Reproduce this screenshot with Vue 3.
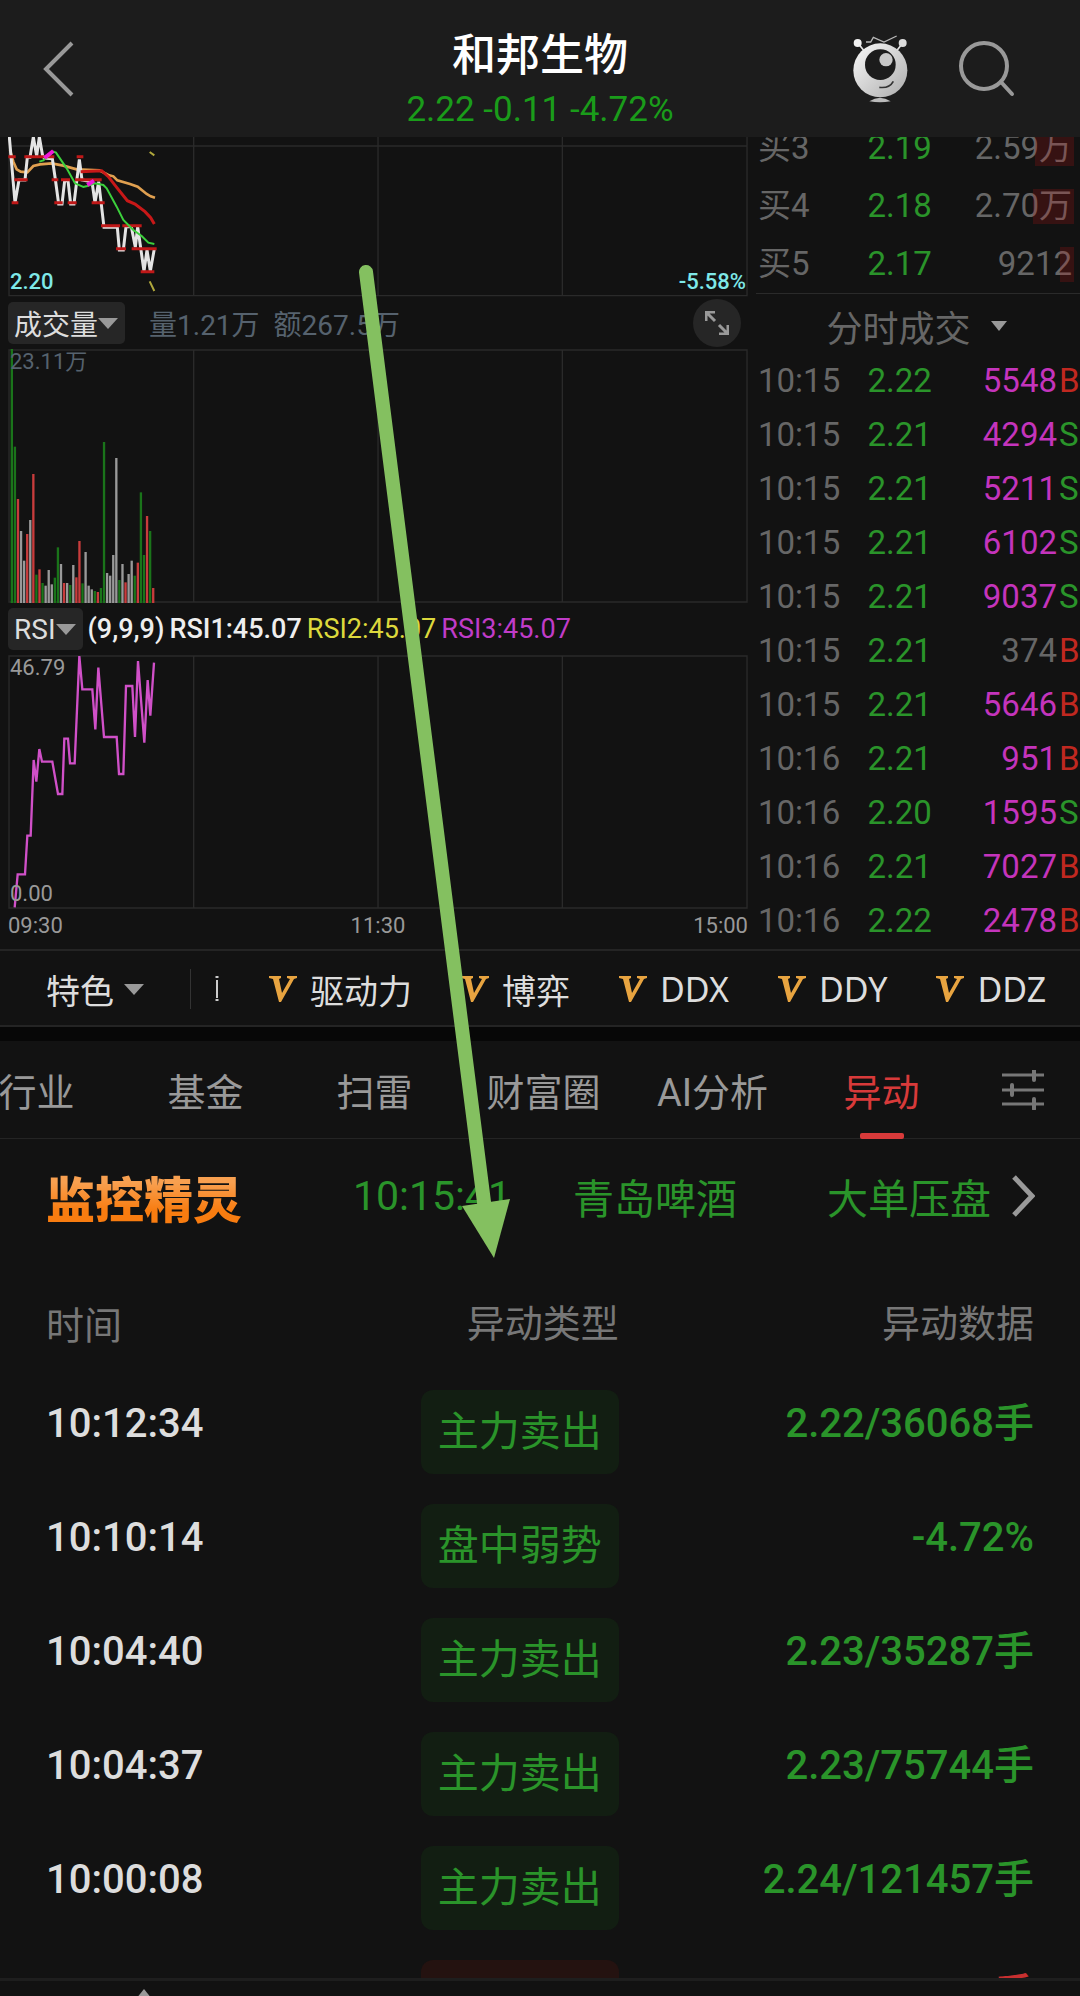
<script setup>
import { ref } from "vue";

const activeTab = ref("异动");

const bids = ref([
    { label: "买3", price: "2.19", volume: "2.59万", depth: 39 },
    { label: "买4", price: "2.18", volume: "2.70万", depth: 41 },
    { label: "买5", price: "2.17", volume: "9212", depth: 14 },
]);

const trades = ref([
    { time: "10:15", price: "2.22", volume: 5548, side: "B" },
    { time: "10:15", price: "2.21", volume: 4294, side: "S" },
    { time: "10:15", price: "2.21", volume: 5211, side: "S" },
    { time: "10:15", price: "2.21", volume: 6102, side: "S" },
    { time: "10:15", price: "2.21", volume: 9037, side: "S" },
    { time: "10:15", price: "2.21", volume: 374, side: "B" },
    { time: "10:15", price: "2.21", volume: 5646, side: "B" },
    { time: "10:16", price: "2.21", volume: 951, side: "B" },
    { time: "10:16", price: "2.20", volume: 1595, side: "S" },
    { time: "10:16", price: "2.21", volume: 7027, side: "B" },
    { time: "10:16", price: "2.22", volume: 2478, side: "B" },
]);

const features = ref(["驱动力", "博弈", "DDX", "DDY", "DDZ"]);
const tabs = ref(["行业", "基金", "扫雷", "财富圈", "AI分析", "异动"]);

const events = ref([
    { time: "10:12:34", type: "主力卖出", data: "2.22/36068手" },
    { time: "10:10:14", type: "盘中弱势", data: "-4.72%" },
    { time: "10:04:40", type: "主力卖出", data: "2.23/35287手" },
    { time: "10:04:37", type: "主力卖出", data: "2.23/75744手" },
    { time: "10:00:08", type: "主力卖出", data: "2.24/121457手" },
    { time: "09:58:21", type: "主力买入", data: "2.25/30120手", up: true },
]);

// g = down, r = up, w = flat; second value is the top of the bar
const volumeBars = [
    ["g", 27], ["g", 320], ["r", 477], ["w", 573], ["w", 662], ["r", 582],
    ["w", 540], ["r", 402], ["g", 704], ["r", 688], ["g", 729], ["w", 737],
    ["w", 690], ["w", 733], ["g", 713], ["g", 622], ["w", 672], ["r", 729],
    ["w", 729], ["g", 735], ["w", 675], ["r", 712], ["r", 603], ["g", 730],
    ["w", 636], ["w", 737], ["w", 748], ["g", 753], ["r", 756], ["g", 744],
    ["g", 306], ["w", 699], ["w", 707], ["w", 645], ["w", 354], ["g", 720],
    ["w", 672], ["r", 727], ["w", 702], ["w", 662], ["g", 707], ["r", 668],
    ["g", 457], ["g", 645], ["r", 528], ["g", 573], ["r", 744],
];
</script>

<template>
    <div class="page">
        <header class="header">
            <button class="back" aria-label="返回">
                <svg width="32" height="56" viewBox="0 0 32 56">
                    <path d="M30 2 L4 28 L30 54" />
                </svg>
            </button>
            <div class="heading">
                <h1>和邦生物</h1>
                <p>2.22 -0.11 -4.72%</p>
            </div>
            <div class="header-actions">
                <button aria-label="助手">
                    <svg width="56" height="70" viewBox="0 0 168 210">
                        <defs>
                            <linearGradient id="robot" x1="0" y1="0" x2="1" y2="1">
                                <stop offset="0" stop-color="#fafafa" />
                                <stop offset="1" stop-color="#acacac" />
                            </linearGradient>
                        </defs>
                        <path d="M20 30 L36 50 M150 30 L134 50" stroke="#e4e4e4" stroke-width="5" />
                        <circle cx="17" cy="27" r="12" fill="#f2f2f2" />
                        <circle cx="152" cy="27" r="12" fill="#dcdcdc" />
                        <path d="M42 24 H56 L64 10 L96 24 L134 6" fill="none" stroke="#b8b8b8" stroke-width="4" />
                        <circle cx="85" cy="109" r="81" fill="url(#robot)" />
                        <circle cx="85" cy="92" r="46" fill="#1c1c1c" />
                        <circle cx="102" cy="77" r="20" fill="#c8c8c8" />
                        <path d="M82 160 Q112 164 124 142" fill="none" stroke="#333" stroke-width="5" />
                        <path d="M52 202 Q84 180 116 202 Q84 208 52 202" fill="#bbb" />
                    </svg>
                </button>
                <button aria-label="搜索">
                    <svg width="58" height="60" viewBox="0 0 58 60">
                        <g fill="none" stroke="#999" stroke-width="4">
                            <circle cx="26" cy="27" r="23" />
                            <path d="M43 43 L54 55" stroke-linecap="round" />
                        </g>
                    </svg>
                </button>
            </div>
        </header>

        <section class="quote">
            <div class="charts">
                <div class="chart">
                    <svg viewBox="24 21 2220 480">
                        <path class="grid" d="M27 21 V497 H2241 V21 M27 48 H2241 M581 21 V497 M1134 21 V497 M1687 21 V497" />
                        <path class="line orange" d="M30 60 L40 95 L50 118 L62 125 L82 127 L100 108 L120 103 L155 100 L190 107 L230 118 L298 121 L325 135 L340 139 L352 151 L390 162 L413 170 L440 192 L452 199 L465 203" />
                        <path class="line price" d="M28 21 L45 218 L57 150 H75 L82 82 H90 L100 21 L110 78 L118 21 L128 78 L133 84 L157 86 L166 148 L176 222 H186 L194 152 H204 L212 222 H222 L238 88 L246 150 L276 155 L285 218 L296 155 L312 292 H352 L358 360 H370 L378 290 H394 L406 352 L413 290 L432 424 L441 360 L451 424 L463 356" />
                        <path class="line ticks" d="M25 80 H47 M73 80 H163 M230 80 H250 M43 149 H83 M155 149 H175 M183 149 H210 M225 149 H305 M35 218 H55 M163 218 H188 M203 218 H230 M275 218 H314 M303 287 H360 M367 287 H425 M348 356 H378 M395 356 H470 M422 425 H463" />
                        <path class="line red" d="M242 125 L305 122 L325 140 L350 172 L382 212 L405 222 L435 245 L452 263 L463 282" />
                        <path class="line green" d="M118 95 L130 91 L160 65 L168 68 L200 115 L225 160 L250 171 L262 168 L285 160 L310 165 L320 175 L350 230 L370 270 L400 300 L425 318 L445 338 L463 342" />
                        <path class="line magenta" d="M133 84 L160 63 M262 165 L282 152" />
                        <path class="line yellow" d="M449 66 L463 76 M449 454 L463 483" />
                    </svg>
                    <span class="tag bottom-left cyan">2.20</span>
                    <span class="tag bottom-right cyan">-5.58%</span>
                </div>

                <div class="indicator">
                    <button class="pill">成交量<i class="caret"></i></button>
                    <span class="turnover">量1.21万</span>
                    <span class="turnover">额267.5万</span>
                    <button class="expand" aria-label="放大">
                        <svg width="24" height="24" viewBox="0 0 24 24">
                            <path d="M10 1 H1 V10 M1 1 L10 10 M14 23 H23 V14 M23 23 L14 14" />
                        </svg>
                    </button>
                </div>

                <div class="chart">
                    <svg viewBox="24 27 2220 762">
                        <path class="grid" d="M27 30 H2241 V786 H27 Z M581 30 V786 M1134 30 V786 M1687 30 V786" />
                        <rect
                            v-for="(bar, i) in volumeBars"
                            :key="i"
                            :class="bar[0]"
                            :x="32 + i * 9.22"
                            :y="bar[1]"
                            width="7"
                            :height="789 - bar[1]"
                        />
                    </svg>
                    <span class="tag top-left slate">23.11万</span>
                </div>

                <div class="indicator rsi">
                    <button class="pill">RSI<i class="caret"></i></button>
                    <span class="params">(9,9,9)</span>
                    <span>RSI1:45.07</span>
                    <span class="rsi2">RSI2:45.07</span>
                    <span class="rsi3">RSI3:45.07</span>
                </div>

                <div class="chart">
                    <svg viewBox="24 165 2220 762">
                        <path class="grid" d="M27 168 H2241 V924 H27 Z M581 168 V924 M1134 168 V924 M1687 168 V924" />
                        <path class="line rsi-line" d="M44 922 L53 823 H75 L82 707 H92 L101 480 L109 545 L118 447 L126 485 H157 L174 582 H187 L193 416 H204 L210 490 H224 L238 168 L247 268 H277 L286 388 L295 203 L312 411 H350 L357 522 H370 L378 258 H397 L405 411 L414 183 L433 428 L443 240 L451 347 L462 188" />
                    </svg>
                    <span class="tag top-left">46.79</span>
                    <span class="tag bottom-left">0.00</span>
                </div>
                <div class="axis">
                    <span>09:30</span>
                    <span>11:30</span>
                    <span>15:00</span>
                </div>
            </div>

            <aside class="orders">
                <ul class="bids">
                    <li v-for="bid in bids" :key="bid.label">
                        <span>{{ bid.label }}</span>
                        <span class="down">{{ bid.price }}</span>
                        <span class="bid-volume">
                            <i class="depth" :style="{ width: bid.depth + 'px' }"></i>
                            {{ bid.volume }}
                        </span>
                    </li>
                </ul>
                <button class="trades-title">分时成交<i class="caret"></i></button>
                <ul class="trades">
                    <li v-for="(trade, i) in trades" :key="i">
                        <span>{{ trade.time }}</span>
                        <span class="down">{{ trade.price }}</span>
                        <span class="trade-volume" :class="{ big: trade.volume > 500 }">{{ trade.volume }}</span>
                        <span class="side" :class="trade.side === 'B' ? 'buy' : 'down'">{{ trade.side }}</span>
                    </li>
                </ul>
            </aside>
        </section>

        <nav class="features">
            <button class="feature-menu">特色<i class="caret"></i></button>
            <div class="feature-list">
                <svg class="cut" width="6" height="30" viewBox="0 0 6 30">
                    <path d="M3 2 V4 M3 25 V27" stroke-width="3" />
                    <path d="M3 6 V24" stroke-width="2" />
                </svg>
                <a v-for="name in features" :key="name" href="#">
                    <svg width="28" height="26" viewBox="0 0 28 26">
                        <path d="M0 0 H12 V2 L10 3 L13 17 L21 3 L18 2 V0 H28 V2 L25 3 L12 26 H10 L4 3 L0 2 Z" />
                    </svg>
                    {{ name }}
                </a>
            </div>
        </nav>

        <nav class="tabs">
            <div class="tab-list">
                <button
                    v-for="tab in tabs"
                    :key="tab"
                    :class="{ active: activeTab === tab }"
                    @click="activeTab = tab"
                >
                    {{ tab }}
                </button>
            </div>
            <button class="settings" aria-label="设置">
                <svg width="42" height="40" viewBox="0 0 42 40">
                    <path d="M0 5 H42 M0 20 H42 M0 34 H42" stroke-width="3" />
                    <path d="M32 0 V10 M10 15 V25 M32 29 V39" stroke-width="4" />
                </svg>
            </button>
        </nav>

        <a class="monitor" href="#">
            <strong>监控精灵</strong>
            <span class="monitor-time">10:15:41</span>
            <span class="monitor-name">青岛啤酒</span>
            <span>大单压盘</span>
            <svg width="24" height="42" viewBox="0 0 24 42">
                <path d="M3 2 L21 21 L3 40" />
            </svg>
        </a>

        <div class="events">
            <table>
                <colgroup>
                    <col class="col-time" />
                    <col class="col-type" />
                    <col />
                </colgroup>
                <thead>
                    <tr>
                        <th>时间</th>
                        <th>异动类型</th>
                        <th>异动数据</th>
                    </tr>
                </thead>
                <tbody>
                    <tr v-for="event in events" :key="event.time" :class="{ up: event.up }">
                        <td>{{ event.time }}</td>
                        <td><span class="badge">{{ event.type }}</span></td>
                        <td>{{ event.data }}</td>
                    </tr>
                </tbody>
            </table>
        </div>

        <footer class="footer">
            <svg width="16" height="10" viewBox="0 0 16 10">
                <path d="M8 0 L16 10 H0 Z" />
            </svg>
        </footer>

        <svg class="pointer" viewBox="0 0 1080 1996">
            <path d="M366 272 L485 1210" />
            <path class="head" d="M462 1206 L510 1199 L494 1258 Z" />
        </svg>
    </div>
</template>

<style>
body {
    margin: 0;
    background: #111;
}
</style>

<style scoped>
* {
    box-sizing: border-box;
}

.page {
    position: relative;
    display: flex;
    flex-direction: column;
    height: 100vh;
    overflow: hidden;
    background: #121212;
    color: #ddd;
    font-family: Roboto, "Noto Sans CJK SC", sans-serif;
}

h1,
p,
ul {
    margin: 0;
    padding: 0;
    list-style: none;
}

button {
    padding: 0;
    border: 0;
    background: none;
    color: inherit;
    font: inherit;
}

a {
    color: inherit;
    text-decoration: none;
}

svg {
    display: block;
    flex: none;
}

.caret {
    display: inline-block;
    border: 10px solid transparent;
    border-top: 11px solid #999;
    border-bottom: 0;
}

/* header */
.header {
    display: grid;
    grid-template-columns: 1fr auto 1fr;
    align-items: center;
    flex: none;
    height: 137px;
    padding: 0 64px 0 42px;
    background: #1c1c1c;
}

.back path {
    fill: none;
    stroke: #999;
    stroke-width: 4;
}

.heading {
    padding: 22px 0 0 22px;
    text-align: center;
}

.heading h1 {
    color: #fff;
    font-size: 44px;
    font-weight: 500;
    line-height: 60px;
}

.heading p {
    color: #1a9c1a;
    font-size: 35px;
    line-height: 48px;
}

.header-actions {
    display: flex;
    align-items: center;
    justify-content: flex-end;
    gap: 50px;
}

/* quote */
.quote {
    display: grid;
    grid-template-columns: 7fr 3fr;
    flex: none;
    overflow: hidden;
}

.charts {
    padding: 0 8px;
}

.chart {
    position: relative;
}

.chart svg {
    width: 100%;
}

.grid {
    fill: none;
    stroke: #2a2a2a;
    stroke-width: 4;
}

.line {
    fill: none;
    stroke-width: 6;
}

.price {
    stroke: #e4e4e4;
    stroke-width: 9;
}

.orange {
    stroke: #e0a050;
    stroke-width: 8;
}

.ticks {
    stroke: #c01818;
    stroke-width: 9;
}

.red {
    stroke: #c81818;
    stroke-width: 9;
}

.green {
    stroke: #3cd03c;
}

.magenta {
    stroke: #f018d8;
    stroke-width: 12;
}

.yellow {
    stroke: #b0a83c;
}

.rsi-line {
    stroke: #d050c8;
    stroke-width: 7;
}

.g {
    fill: #1a741a;
}

.r {
    fill: #c83c3c;
}

.w {
    fill: #999;
}

.tag {
    position: absolute;
    color: #999;
    font-size: 22px;
    line-height: 26px;
}

.top-left {
    top: 0;
    left: 2px;
}

.bottom-left {
    bottom: 2px;
    left: 2px;
}

.bottom-right {
    right: 2px;
    bottom: 2px;
}

.cyan {
    color: #7ee8e8;
    font-weight: 500;
}

.slate {
    color: #56626e;
}

.indicator {
    display: flex;
    align-items: center;
    height: 52px;
    font-size: 28px;
    white-space: nowrap;
}

.pill {
    display: flex;
    align-items: center;
    height: 42px;
    padding: 0 7px 0 6px;
    border-radius: 5px;
    background: #262626;
}

.turnover {
    margin-left: 14px;
    color: #56626e;
}

.pill + .turnover {
    margin-left: 24px;
}

.expand {
    display: flex;
    align-items: center;
    justify-content: center;
    width: 48px;
    height: 48px;
    margin-left: auto;
    margin-right: 7px;
    border-radius: 50%;
    background: #262626;
}

.expand path {
    fill: none;
    stroke: #999;
    stroke-width: 3;
}

.rsi {
    gap: 5px;
    color: #eee;
    font-size: 27px;
    font-weight: 500;
}

.rsi .pill {
    color: #ddd;
    font-size: 28px;
    font-weight: 400;
}

.rsi2 {
    color: #dcd83c;
}

.rsi3 {
    color: #c03cc8;
}

.rsi2,
.rsi3 {
    font-weight: 400;
}

.axis {
    display: flex;
    justify-content: space-between;
    height: 40px;
    color: #999;
    font-size: 22px;
    line-height: 34px;
}

.orders {
    color: #666;
    font-size: 33px;
}

.bids {
    margin-top: -18px;
    border-bottom: 1px solid #2a2a2a;
}

.bids li,
.trades li {
    display: grid;
    grid-template-columns: 34% 24% 1fr;
    padding-left: 2px;
    line-height: 58px;
    white-space: nowrap;
}

.trades li {
    grid-template-columns: 34% 24% 1fr 23px;
    line-height: 54px;
}

.down {
    color: #2a942a;
}

.bid-volume {
    position: relative;
    padding-right: 8px;
    text-align: right;
}

.depth {
    position: absolute;
    top: 12px;
    right: 6px;
    height: 35px;
    background: rgba(200, 20, 20, 0.2);
}

.trades-title {
    display: flex;
    align-items: center;
    justify-content: center;
    width: 100%;
    height: 60px;
    padding: 4px 3px 0 0;
    font-size: 36px;
}

.trades-title .caret {
    margin-left: 20px;
    border-width: 10px 8px 0;
}

.trade-volume {
    text-align: right;
}

.big {
    color: #c434bc;
}

.side {
    padding-left: 2px;
}

.buy {
    color: #c02820;
}

/* feature bar */
.features {
    display: flex;
    align-items: center;
    flex: none;
    height: 92px;
    padding-left: 46px;
    border-top: 2px solid #242424;
    border-bottom: 14px solid #070707;
    box-shadow: inset 0 -2px #242424;
    font-size: 34px;
}

.feature-menu {
    display: flex;
    align-items: center;
    gap: 10px;
    height: 40px;
    padding-right: 46px;
    border-right: 1px solid #333;
    white-space: nowrap;
}

.feature-list {
    display: flex;
    align-items: center;
    gap: 49px;
    margin-left: 23px;
    font-family: "Noto Sans", "Noto Sans CJK SC", sans-serif;
    white-space: nowrap;
}

.feature-list a {
    display: flex;
    align-items: center;
    gap: 13px;
}

.feature-list a path {
    fill: #e8a440;
}

.cut path {
    stroke: #ccc;
}

/* tabs */
.tabs {
    display: flex;
    align-items: center;
    flex: none;
    height: 98px;
    border-bottom: 1px solid #242424;
}

.tab-list {
    display: flex;
    justify-content: flex-end;
    flex: 1;
    overflow: hidden;
}

.tab-list button {
    position: relative;
    flex: none;
    width: 169px;
    height: 98px;
    color: #999;
    font-size: 38px;
}

.tab-list .active {
    color: #d83a3a;
}

.active::after {
    content: "";
    position: absolute;
    bottom: 0;
    left: 50%;
    width: 44px;
    height: 6px;
    margin-left: -22px;
    border-radius: 2px;
    background: #d83a3a;
}

.settings {
    padding: 0 36px;
}

.settings path {
    stroke: #777;
    stroke-linecap: round;
}

/* monitor */
.monitor {
    display: flex;
    align-items: center;
    flex: none;
    height: 114px;
    margin-bottom: 17px;
    padding: 0 45px 0 46px;
    color: #2a942a;
    font-size: 41px;
    white-space: nowrap;
}

.monitor strong {
    background: linear-gradient(#f8a050 30%, #f87c10 70%);
    background-clip: text;
    color: transparent;
    font-size: 49px;
    font-weight: 900;
}

.monitor-time {
    margin-left: auto;
}

.monitor-name {
    margin: 0 90px 0 62px;
}

.monitor svg {
    margin-left: 20px;
}

.monitor path {
    fill: none;
    stroke: #999;
    stroke-width: 5;
}

/* events */
.events {
    flex: 1;
    min-height: 0;
    overflow: hidden;
}

table {
    width: 100%;
    border-collapse: collapse;
    table-layout: fixed;
}

.col-time {
    width: 35%;
}

.col-type {
    width: 22.3%;
}

th,
td {
    padding: 0;
    text-align: right;
    white-space: nowrap;
}

th {
    height: 105px;
    color: #777;
    font-size: 38px;
    font-weight: 400;
}

th + th {
    padding-bottom: 5px;
}

td {
    height: 114px;
    padding-top: 15px;
    color: #2a942a;
    font-size: 40px;
    font-weight: 500;
    line-height: 68px;
    vertical-align: top;
}

th:first-child,
td:first-child {
    padding-left: 46px;
    text-align: left;
}

th:last-child,
td:last-child {
    padding-right: 46px;
}

td:first-child {
    color: #ddd;
}

.badge {
    display: inline-block;
    padding: 0 17px;
    border-radius: 12px;
    background: #121e12;
    font-size: 41px;
    font-weight: 400;
    line-height: 84px;
}

.up td:not(:first-child) {
    color: #c83030;
}

.up .badge {
    background: #241210;
}

.footer {
    flex: none;
    height: 18px;
    padding: 8px 136px 0;
    border-top: 3px solid #1e1e1e;
}

.footer path {
    fill: #999;
}

/* green guide arrow above everything */
.pointer {
    position: absolute;
    top: 0;
    left: 0;
    width: 100%;
    fill: none;
    stroke: #84c060;
    stroke-width: 14;
    stroke-linecap: round;
    pointer-events: none;
}

.pointer .head {
    fill: #84c060;
    stroke: none;
}
</style>
